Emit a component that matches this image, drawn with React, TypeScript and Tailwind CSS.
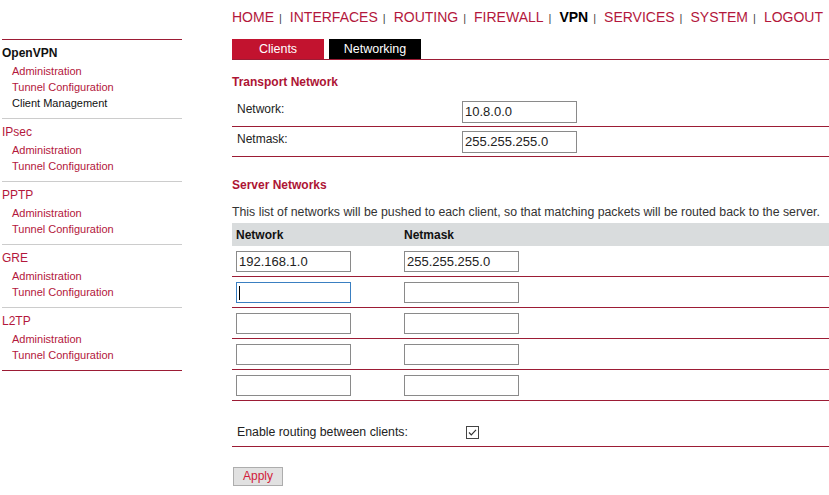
const RED = "text-[#b3173c]";

const navItems = ["HOME", "INTERFACES", "ROUTING", "FIREWALL", "VPN", "SERVICES", "SYSTEM", "LOGOUT"];

const sections = [
  { title: "OpenVPN", active: true, items: ["Administration", "Tunnel Configuration", "Client Management"] },
  { title: "IPsec", items: ["Administration", "Tunnel Configuration"] },
  { title: "PPTP", items: ["Administration", "Tunnel Configuration"] },
  { title: "GRE", items: ["Administration", "Tunnel Configuration"] },
  { title: "L2TP", items: ["Administration", "Tunnel Configuration"] },
];

const serverRows = [
  { network: "192.168.1.0", netmask: "255.255.255.0" },
  { network: "", netmask: "", focused: true },
  { network: "", netmask: "" },
  { network: "", netmask: "" },
  { network: "", netmask: "" },
];

function TextBox({ value, focused }: { value: string; focused?: boolean }) {
  return (
    <div className="relative">
      <input
        readOnly
        value={value}
        className={`block w-[115px] h-[21px] px-[2px] text-[13px] text-[#222] bg-white border outline-none ${
          focused ? "border-[#3a7fc1]" : "border-[#8a8a8a]"
        }`}
      />
      {focused && <span className="absolute left-[3px] top-[4px] w-[1px] h-[14px] bg-black" />}
    </div>
  );
}

export default function App() {
  return (
    <div className="flex w-[829px] h-[495px] overflow-hidden bg-white font-['Liberation_Sans',Arial,sans-serif] text-[#222]">
      {/* Sidebar */}
      <aside className="ml-[2px] w-[180px] shrink-0 pt-[39px]">
        <div className="border-t border-[#9c1c35]">
          {sections.map((s, i) => (
            <div
              key={s.title}
              className={`pt-[5px] pb-[7px] border-b ${
                i === sections.length - 1 ? "border-[#9c1c35]" : "border-[#cccccc]"
              }`}
            >
              <div
                className={`h-[16px] leading-[16px] text-[12px] ${
                  s.active ? "font-bold text-[#111]" : RED
                }`}
              >
                {s.title}
              </div>
              <div className="mt-[2px]">
                {s.items.map((item) => (
                  <div
                    key={item}
                    className={`h-[16px] leading-[16px] pl-[10px] text-[11px] ${
                      item === "Client Management" ? "text-[#111]" : RED
                    }`}
                  >
                    {item}
                  </div>
                ))}
              </div>
            </div>
          ))}
        </div>
      </aside>

      {/* Main content */}
      <main className="ml-[50px] flex-1 min-w-0">
        {/* Top navigation */}
        <nav className="flex items-baseline h-[16px] mt-[9px] leading-[16px] whitespace-nowrap">
          {navItems.map((n, i) => (
            <span key={n} className="flex items-baseline">
              <span
                className={`text-[14px] ${n === "VPN" ? "font-bold text-black" : RED}`}
              >
                {n}
              </span>
              {i < navItems.length - 1 && (
                <span className="ml-[5px] mr-[8px] text-[11px] text-[#444]">|</span>
              )}
            </span>
          ))}
        </nav>

        {/* Tabs */}
        <div className="flex gap-[5px] mt-[14px] border-b border-[#9c1c35]">
          <div className="w-[92px] h-[20px] leading-[20px] text-center text-[12.5px] text-white bg-[#c2132f]">
            Clients
          </div>
          <div className="w-[92px] h-[20px] leading-[20px] text-center text-[12.5px] text-white bg-black">
            Networking
          </div>
        </div>

        {/* Transport Network */}
        <h2 className="mt-[14px] h-[16px] leading-[16px] text-[12px] font-bold text-[#ad1434]">
          Transport Network
        </h2>
        <div className="mt-[7px]">
          {[
            ["Network:", "10.8.0.0"],
            ["Netmask:", "255.255.255.0"],
          ].map(([label, val]) => (
            <div key={label} className="flex items-center h-[30px] border-b border-[#9c1c35]">
              <div className="w-[230px] pl-[5px] text-[12px] leading-[16px] -mt-[5px]">{label}</div>
              <input
                readOnly
                value={val}
                className="block w-[115px] h-[22px] px-[2px] text-[13px] text-[#222] bg-white border border-[#8a8a8a] outline-none"
              />
            </div>
          ))}
        </div>

        {/* Server Networks */}
        <h2 className="mt-[20px] h-[16px] leading-[16px] text-[12px] font-bold text-[#ad1434]">
          Server Networks
        </h2>
        <p className="mt-[11px] h-[16px] leading-[16px] text-[12.3px] text-[#333] whitespace-nowrap">
          This list of networks will be pushed to each client, so that matching packets will be routed back to the server.
        </p>

        <div className="mt-[3px] flex items-center h-[23px] bg-[#d9dcdd] text-[12px] font-bold text-[#111]">
          <div className="w-[172px] pl-[4px]">Network</div>
          <div>Netmask</div>
        </div>
        {serverRows.map((r, i) => (
          <div key={i} className="flex items-center h-[31px] border-b border-[#9c1c35]">
            <div className="w-[172px] pl-[4px]">
              <TextBox value={r.network} focused={r.focused} />
            </div>
            <TextBox value={r.netmask} />
          </div>
        ))}

        {/* Routing between clients */}
        <div className="flex items-end h-[46px] pb-[7px] border-b border-[#9c1c35]">
          <div className="w-[230px] pl-[5px] text-[12.3px] leading-[16px] -mb-[1px]">
            Enable routing between clients:
          </div>
          <div className="ml-[4px] w-[13px] h-[13px] border border-[#444] bg-white flex items-center justify-center">
            <svg width="11" height="11" viewBox="0 0 11 11" fill="none">
              <path d="M2 5.5 L4.3 7.8 L9 2.8" stroke="#333" strokeWidth="1.2" />
            </svg>
          </div>
        </div>

        <button className="mt-[20px] ml-[1px] w-[50px] h-[19px] leading-[17px] text-[12px] text-[#d11a3a] bg-[#e1e1e1] border border-[#adadad]">
          Apply
        </button>
      </main>
    </div>
  );
}
